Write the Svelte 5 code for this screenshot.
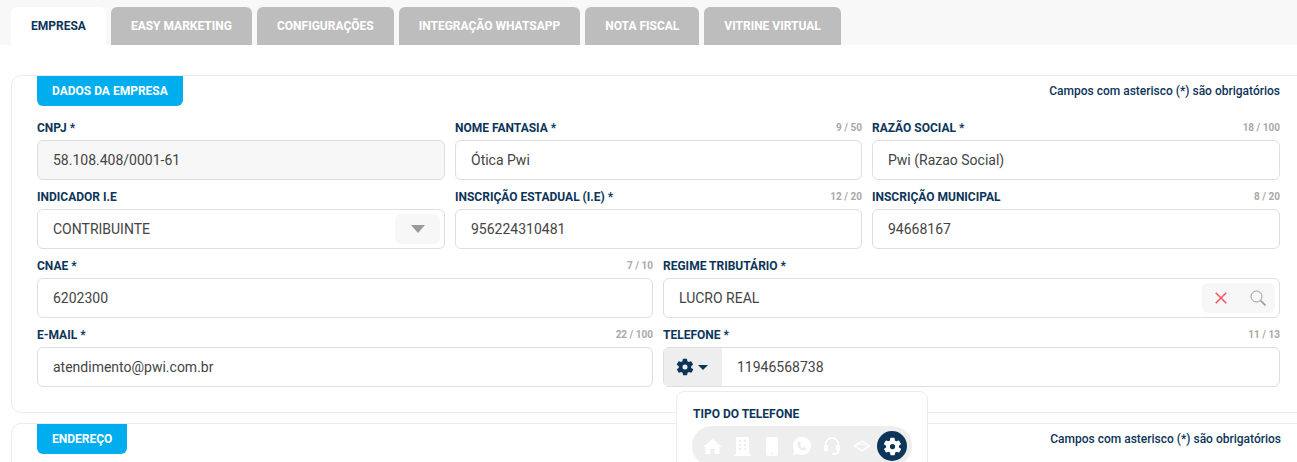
<script>
  const tabs = ['EMPRESA', 'EASY MARKETING', 'CONFIGURAÇÕES', 'INTEGRAÇÃO WHATSAPP', 'NOTA FISCAL', 'VITRINE VIRTUAL'];
  const gear = 'M19.400 13a7.500 7.500 0 0 0 0-2l2.100-1.600a.5.5 0 0 0 .1-.6l-2-3.500a.5.5 0 0 0-.6-.2l-2.500 1a7.300 7.300 0 0 0-1.700-1l-.4-2.600a.5.5 0 0 0-.5-.4h-4a.5.5 0 0 0-.5.4l-.4 2.600a7.300 7.300 0 0 0-1.700 1l-2.500-1a.5.5 0 0 0-.6.2l-2 3.500a.5.5 0 0 0 .1.600L4.600 11a7.500 7.500 0 0 0 0 2l-2.100 1.600a.5.5 0 0 0-.1.600l2 3.500a.5.5 0 0 0 .6.200l2.500-1c.5.4 1.100.7 1.700 1l.4 2.600a.5.5 0 0 0 .5.400h4a.5.5 0 0 0 .5-.4l.4-2.600a7.300 7.300 0 0 0 1.700-1l2.500 1a.5.5 0 0 0 .6-.2l2-3.500a.5.5 0 0 0-.1-.6zM12 15a3 3 0 1 1 0-6 3 3 0 0 1 0 6z';
</script>

<div class="page">
  <nav class="tabs">
    {#each tabs as t, i}
      <div class="tab" class:active={i === 0}>{t}</div>
    {/each}
  </nav>

  <section class="card first">
    <header class="head">
      <div class="badge">DADOS DA EMPRESA</div>
      <div class="note">Campos com asterisco (*) são obrigatórios</div>
    </header>

    <div class="row thirds">
      <div class="field">
        <div class="lbl"><span>CNPJ *</span></div>
        <div class="input disabled"><span class="val">58.108.408/0001-61</span></div>
      </div>
      <div class="field">
        <div class="lbl"><span>NOME FANTASIA *</span><small>9 / 50</small></div>
        <div class="input"><span class="val">Ótica Pwi</span></div>
      </div>
      <div class="field">
        <div class="lbl"><span>RAZÃO SOCIAL *</span><small>18 / 100</small></div>
        <div class="input"><span class="val">Pwi (Razao Social)</span></div>
      </div>
    </div>

    <div class="row thirds">
      <div class="field">
        <div class="lbl"><span>INDICADOR I.E</span></div>
        <div class="input">
          <span class="val">CONTRIBUINTE</span>
          <div class="addon drop">
            <svg width="14" height="8" viewBox="0 0 14 8"><path d="M0 0h14L7 8z" fill="#9a9a9a" /></svg>
          </div>
        </div>
      </div>
      <div class="field">
        <div class="lbl"><span>INSCRIÇÃO ESTADUAL (I.E) *</span><small>12 / 20</small></div>
        <div class="input"><span class="val">956224310481</span></div>
      </div>
      <div class="field">
        <div class="lbl"><span>INSCRIÇÃO MUNICIPAL</span><small>8 / 20</small></div>
        <div class="input"><span class="val">94668167</span></div>
      </div>
    </div>

    <div class="row halves">
      <div class="field">
        <div class="lbl"><span>CNAE *</span><small>7 / 10</small></div>
        <div class="input"><span class="val">6202300</span></div>
      </div>
      <div class="field">
        <div class="lbl"><span>REGIME TRIBUTÁRIO *</span></div>
        <div class="input">
          <span class="val">LUCRO REAL</span>
          <div class="addon act">
            <svg width="12" height="12" viewBox="0 0 12 12"><path d="M.7.7l10.600 10.600M11.300.7L.7 11.300" stroke="#f4545f" stroke-width="1.500" fill="none" /></svg>
            <svg width="16" height="16" viewBox="0 0 16 16"><circle cx="6.500" cy="6.500" r="5.500" stroke="#999" stroke-width="1" fill="none" /><path d="M10.500 10.500l5 5" stroke="#999" stroke-width="1.600" fill="none" /></svg>
          </div>
        </div>
      </div>
    </div>

    <div class="row halves">
      <div class="field">
        <div class="lbl"><span>E-MAIL *</span><small>22 / 100</small></div>
        <div class="input"><span class="val">atendimento@pwi.com.br</span></div>
      </div>
      <div class="field">
        <div class="lbl"><span>TELEFONE *</span><small>11 / 13</small></div>
        <div class="input phone">
          <div class="prefix">
            <svg width="20" height="20" viewBox="0 0 24 24"><path fill="#0d3559" d={gear} /></svg>
            <svg width="10" height="5" viewBox="0 0 10 5"><path d="M0 0h10L5 5z" fill="#0d3559" /></svg>
          </div>
          <span class="val">11946568738</span>
        </div>
      </div>
    </div>
  </section>

  <section class="card second">
    <header class="head wide">
      <div class="badge">ENDEREÇO</div>
      <div class="note">Campos com asterisco (*) são obrigatórios</div>
    </header>
  </section>

  <div class="popover">
    <div class="pop-title">TIPO DO TELEFONE</div>
    <div class="pills">
      <div class="opt"><svg width="19" height="15" viewBox="0 0 19 15"><path fill="#fff" d="M9.500 0L0 8h2.500v7h5v-5h4v5h5V8H19z" /></svg></div>
      <div class="opt"><svg width="17" height="19" viewBox="0 0 17 19"><path fill="#fff" fill-rule="evenodd" d="M2 0h13v17.500h2V19H0v-1.500h2zM5 3v2h2V3zM10 3v2h2V3zM5 7v2h2V7zM10 7v2h2V7zM5 11v2h2v-2zM10 11v2h2v-2z" /></svg></div>
      <div class="opt"><svg width="12" height="19" viewBox="0 0 12 19"><rect width="12" height="19" rx="2" fill="#fff" /><circle cx="6" cy="17" r=".8" fill="#ddd" /></svg></div>
      <div class="opt"><svg width="18" height="18" viewBox="0 0 18 18"><path fill="#fff" fill-rule="evenodd" d="M9 0a9 9 0 0 0-7.700 13.600L0 18l4.500-1.200A9 9 0 1 0 9 0zM6 4.500c.5 0 .8.100 1 .6l.7 1.600c.1.300 0 .6-.2.800l-.6.700c.7 1.300 1.800 2.300 3.200 3l.7-.9c.2-.2.500-.3.800-.2l1.600.8c.3.200.4.500.3.800-.2 1.200-1.200 2-2.400 2C7.800 13.700 4.300 10.200 4.300 7c0-1.100.7-2.500 1.700-2.500z" /></svg></div>
      <div class="opt"><svg width="16" height="18" viewBox="0 0 16 18"><path fill="none" stroke="#fff" stroke-width="1.800" d="M1.500 10V7.500a6.500 6.500 0 0 1 13 0V10M14.500 12v2c0 1.500-1.500 2.800-3 2.800H8" /><rect x="0" y="8" width="4" height="6" rx="1" fill="#fff" /><rect x="12" y="8" width="4" height="6" rx="1" fill="#fff" /></svg></div>
      <div class="opt"><svg width="18" height="12" viewBox="0 0 18 12"><path fill="none" stroke="#fff" stroke-width="1.500" d="M9 1.200L16.500 6 9 10.800 1.500 6z" /><path d="M5 5c3-1 6-.5 8 1.500" fill="none" stroke="#fff" stroke-width="1" /></svg></div>
      <div class="selected">
        <svg width="21" height="21" viewBox="0 0 24 24"><path fill="#fff" d={gear} /></svg>
      </div>
    </div>
  </div>
</div>

<style>
  :global(body) { margin: 0; background: #fff; overflow: hidden; }
  .page {
    position: relative;
    width: 1297px;
    height: 462px;
    overflow: hidden;
    font-family: Roboto, sans-serif;
    color: #0d3559;
  }
  .tabs {
    display: flex;
    gap: 5px;
    height: 38px;
    padding: 7px 0 0 11px;
    background: #f8f8f8;
    margin-bottom: 30px;
  }
  .tab {
    display: flex;
    align-items: center;
    justify-content: center;
    padding: 0 20px;
    height: 38px;
    background: #bdbdbd;
    color: #fff;
    font-size: 12px;
    font-weight: 700;
    border-radius: 6px 6px 0 0;
    box-sizing: border-box;
  }
  .tab.active { background: #fff; color: #0d3559; }
  .card {
    margin-left: 11px;
    width: 1300px;
    box-sizing: border-box;
    border: 1px solid #ececec;
    border-radius: 10px;
    padding: 0 0 0 25px;
  }
  .first { height: 338px; margin-bottom: 10px; }
  .second { height: 80px; }
  .head {
    display: flex;
    justify-content: space-between;
    width: 1243px;
    height: 30px;
    margin-bottom: 13px;
  }
  .head.wide { width: 1244px; }
  .badge {
    background: #00aeef;
    color: #fff;
    font-size: 12px;
    font-weight: 700;
    height: 30px;
    line-height: 30px;
    padding: 0 15px;
    border-radius: 0 0 6px 6px;
  }
  .note {
    font-size: 12px;
    font-weight: 500;
    line-height: 31px;
  }
  .row {
    display: grid;
    gap: 10px;
    width: 1243px;
    margin-bottom: 8px;
  }
  .thirds { grid-template-columns: 408px 407px 408px; }
  .halves { grid-template-columns: 616px 617px; }
  .field { min-width: 0; }
  .lbl {
    display: flex;
    justify-content: space-between;
    align-items: center;
    height: 17px;
    margin-bottom: 4px;
    font-size: 12px;
    font-weight: 700;
  }
  .lbl small {
    font-size: 10px;
    font-weight: 700;
    color: #a8a8a8;
  }
  .input {
    position: relative;
    display: flex;
    align-items: center;
    height: 40px;
    box-sizing: border-box;
    border: 1px solid #dedede;
    border-radius: 6px;
    padding-left: 15px;
    background: #fff;
  }
  .disabled { background: #f7f7f7; }
  .val {
    font-size: 14px;
    color: #444;
  }
  .addon {
    position: absolute;
    top: 4px;
    right: 4px;
    height: 30px;
    background: #f7f7f7;
    border-radius: 6px;
    display: flex;
    align-items: center;
    justify-content: center;
  }
  .drop { width: 45px; }
  .act { width: 73px; box-sizing: border-box; padding-left: 13px; justify-content: flex-start; gap: 23px; }
  .phone { padding-left: 0; overflow: hidden; }
  .prefix {
    width: 58px;
    height: 38px;
    box-sizing: border-box;
    padding-right: 4px;
    background: #eee;
    display: flex;
    align-items: center;
    justify-content: center;
    gap: 3px;
    margin-right: 15px;
  }
  .popover {
    position: absolute;
    left: 676px;
    top: 391px;
    width: 252px;
    height: 90px;
    box-sizing: border-box;
    background: #fff;
    border: 1px solid #ececec;
    border-radius: 8px;
    padding: 15px;
  }
  .pop-title {
    font-size: 12px;
    font-weight: 700;
    line-height: 14px;
    margin-left: 1px;
    margin-bottom: 5px;
  }
  .pills {
    display: flex;
    align-items: center;
    width: 220px;
    height: 40px;
    box-sizing: border-box;
    background: #eee;
    border-radius: 20px;
    padding: 0 5px;
  }
  .opt {
    width: 30px;
    height: 30px;
    display: flex;
    align-items: center;
    justify-content: center;
  }
  .selected {
    width: 30px;
    height: 30px;
    border-radius: 50%;
    background: #0d3559;
    display: flex;
    align-items: center;
    justify-content: center;
  }
</style>
